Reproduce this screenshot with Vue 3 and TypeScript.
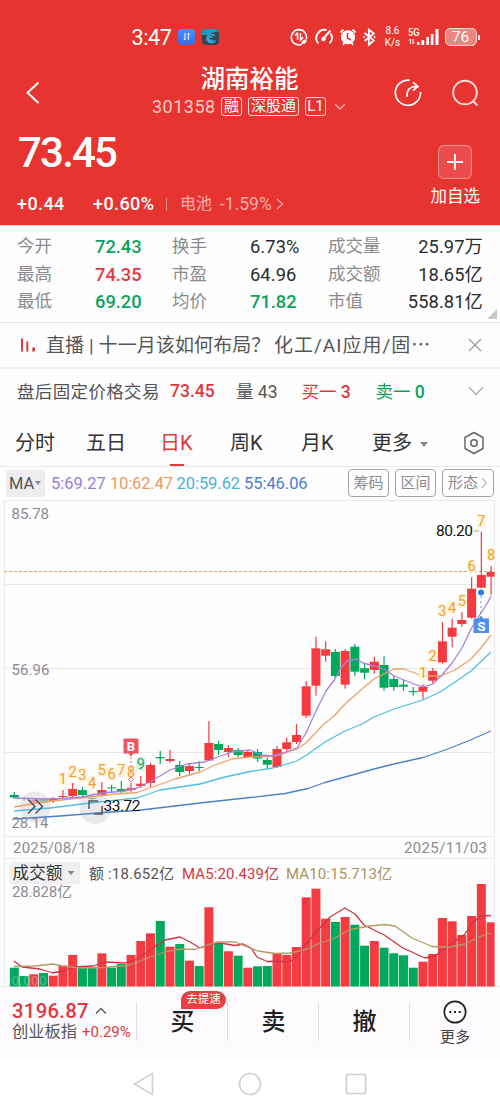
<script setup lang="ts">
type Tone = 'up' | 'down' | 'flat'
interface Stat { label: string; value: string; tone: Tone }
interface Mark { n: string; i: number; y: number; green?: boolean }

const stats: Stat[] = [
  { label: '今开', value: '72.43', tone: 'down' },
  { label: '换手', value: '6.73%', tone: 'flat' },
  { label: '成交量', value: '25.97万', tone: 'flat' },
  { label: '最高', value: '74.35', tone: 'up' },
  { label: '市盈', value: '64.96', tone: 'flat' },
  { label: '成交额', value: '18.65亿', tone: 'flat' },
  { label: '最低', value: '69.20', tone: 'down' },
  { label: '均价', value: '71.82', tone: 'down' },
  { label: '市值', value: '558.81亿', tone: 'flat' },
]

const tabs = ['分时', '五日', '日K', '周K', '月K']

// [rising, wick top, body top, body bottom, wick bottom, volume top]
const days: [number, number, number, number, number, number][] = [
  [0, 792, 795, 797.5, 799, 967.7], [0, 797, 798, 799, 801, 976], [1, 798, 800, 802.5, 804, 974.3],
  [0, 798, 799, 802.5, 803, 973], [1, 797, 799, 801, 803, 975.7], [1, 790, 796, 797, 799, 965.7],
  [1, 783, 789, 796, 798, 955], [0, 787, 790, 795, 797, 967.7], [0, 796, 798, 799, 804, 967.7],
  [1, 782, 790, 795.5, 797, 953.3], [0, 785, 787.3, 788.3, 792, 967.7], [0, 781, 789, 791, 793, 964],
  [1, 783, 788, 790, 792, 955], [1, 776, 783.7, 786, 788, 941], [1, 763, 765, 783, 787, 933.3],
  [0, 751, 757, 758.3, 764, 921], [1, 750, 759, 761, 763, 946.7], [0, 761, 765, 772, 776, 944],
  [1, 763, 766, 771, 774, 960.7], [0, 761, 767, 768, 771, 966], [1, 721, 743, 760.5, 761, 907.3],
  [0, 741, 744, 750, 755, 943.3], [1, 745, 748, 752, 757, 951.3], [0, 748, 750, 755, 757, 955.7],
  [1, 750, 752, 757, 757, 967.7], [0, 749, 752, 758.5, 762, 966.3], [0, 758, 760, 764.7, 768, 966],
  [1, 746, 749, 767, 768, 953.3], [1, 737.5, 742.3, 749, 752, 955], [1, 724, 735, 742, 744, 947],
  [1, 681, 686.3, 715.7, 718, 897.3], [1, 636.7, 648.3, 685.7, 695.7, 888.7], [1, 641.3, 649.3, 655.7, 661.7, 918.7],
  [0, 649, 652, 676, 678, 922], [1, 649, 651, 684.7, 688.7, 917], [0, 644, 646.7, 671.7, 675.7, 924.7],
  [0, 664, 668.3, 672.7, 679.3, 945.7], [1, 656.7, 661.7, 670, 673.7, 941], [0, 656.3, 665, 687.7, 690.7, 947.7],
  [0, 675.3, 679, 687, 690.7, 953.3], [0, 680, 684.7, 686.7, 691, 955.3], [0, 687, 691, 692.2, 695.7, 967.7],
  [1, 684.3, 687, 691.7, 699.3, 961.7], [1, 668, 671, 680.7, 683.3, 954], [1, 622, 641.3, 662.3, 663.7, 918],
  [1, 618.7, 627.7, 636.7, 647.3, 921.3], [1, 612, 620, 624, 627, 935], [1, 577.3, 588.7, 617.7, 618.7, 916],
  [1, 531.7, 575, 587.7, 588.3, 884], [1, 566, 572, 576.7, 595, 922.3],
]
const cx = (i: number): number => 14.3 + i * 9.73
const bodyWidth = (i: number): number => (i === 49 ? 8 : 9)

const marks: Mark[] = [
  { n: '1', i: 5, y: 779 }, { n: '2', i: 6, y: 772 }, { n: '3', i: 7, y: 775 }, { n: '4', i: 8, y: 783 },
  { n: '5', i: 9, y: 770 }, { n: '6', i: 10, y: 774 }, { n: '7', i: 11, y: 770 }, { n: '8', i: 12, y: 772 },
  { n: '9', i: 13, y: 764, green: true },
  { n: '1', i: 42, y: 673 }, { n: '2', i: 43, y: 656 }, { n: '3', i: 44, y: 611 }, { n: '4', i: 45, y: 607.5 },
  { n: '5', i: 46, y: 601 }, { n: '6', i: 47, y: 566 }, { n: '7', i: 48, y: 521 }, { n: '8', i: 49, y: 554.5 },
]

const priceLines = [
  { color: '#4c80c4', points: '14,819 60,816 110,812 137,810.5 200,803 250,797.5 285,793.5 308,788.5 325,782.5 345,777 374,769 394,764 423,757.5 445,750 468,741 491,731' },
  { color: '#50bfe0', points: '14,811 50,808 90,803 137,798 160,790 200,784 225,777 250,771.5 273,768 297,761 308,754 325,742 345,731 362,724 374,717 394,709 423,700 440,692 455,682 471,671 491,652' },
  { color: '#f0a068', points: '14,807 43,802 80,798 115,794 137,792.5 150,788 175,779 200,772 215,765 232,759 250,757 270,756.5 283,754 297,749 306,743 323,725 335,715 345,704 362,689 374,679 384,674 394,669 404,669 423,676 440,676 455,670 471,659 481,648 491,635' },
  { color: '#a583dc', points: '14,798 43,799 62,798.5 82,797 102,793 125,791 137,788 150,782 170,770 187,764 205,762 215,758 232,752 250,750 262,755 272,756 283,753 297,748 306,733 316,711 326,691 335,679 340,669 347,661 357,659 363,663 374,666 384,669 394,676 404,680 414,684 423,687 433,684 442,675 452,663 462,648 471,629 477,619 483,610 488,602 491,596' },
]
const volumeLines = [
  { color: '#cf3444', points: '14,961 22,967 40,969 53,973 62,971 75,967 93,966 105,962 125,963 137,959 150,950 165,940 180,937 190,942 200,948 212,944 220,943 235,945.5 243,944 251,948 257,957 267,961.5 290,961.5 298,956 303,948 317,931 330,917 345,908 355,914 364,925 384,935 403,948 425,958 435,956 447,947 465,934 471,924 481,916 491,915.5' },
  { color: '#b39a66', points: '14,966.5 35,966 53,964 62,966 80,968 105,967.5 130,965 150,957 165,952 180,949 195,949.5 207,945 218,942 235,942 250,948 258,951 275,953.5 290,953 307,949 320,943 333,939 350,929.5 370,926 385,924.5 395,926 412,938 432,946.5 450,947 465,944 480,936.5 491,933' },
]
</script>

<template>
  <main class="phone">
    <header class="hero">
      <div class="status">
        <span class="clock">3:47</span>
        <svg class="apps" width="42" height="18" viewBox="0 0 42 18">
          <defs>
            <linearGradient id="tile" x1="0" y1="0" x2="0" y2="1"><stop offset="0" stop-color="#3f96f8" /><stop offset="1" stop-color="#3f68e4" /></linearGradient>
          </defs>
          <rect x="0" y="1" width="17" height="16" rx="4" fill="url(#tile)" />
          <path d="M7 5v7l-1.500-1.500M10.300 12V5l1.500 1.500" fill="none" stroke="#fff" stroke-width="1" />
          <rect x="24" y="1" width="17" height="16" rx="4" fill="#3a444c" />
          <path d="M24 7V5a4 4 0 0 1 4-4h9a4 4 0 0 1 4 2l-7 2-4 2z" fill="#199bc4" />
          <path d="M37 8a4.5 4 0 1 0 .4 4.5M34.5 9.7a2 2 0 1 0 0 2" fill="none" stroke="#2da9dc" stroke-width="1.7" />
        </svg>
        <svg class="sys" width="86" height="20" viewBox="0 0 86 20" fill="none" stroke="#fff" stroke-width="1.6">
          <path d="M12 17.2A7.6 7.6 0 1 1 16.3 12" />
          <path d="M7.5 5.7v7M7.6 5.7 5 8.4M10.5 6v7l2.6-2.6" stroke-width="1.5" />
          <path d="M11.5 17c-.5-3 2-4.5 5-4.7.5 3.4-1.6 5.3-5 4.7z" fill="#fff" stroke="none" />
          <path d="M28.3 16.3A8.2 8.2 0 0 1 36.5 3M40.7 6.5a8.2 8.2 0 0 1-1.2 9.8" stroke-width="1.9" />
          <path d="M33 12 40.5 3.5" stroke-width="2" /><circle cx="33.5" cy="12" r="2.2" fill="#fff" stroke="none" />
          <circle cx="58" cy="10.3" r="7" fill="#fff" stroke="none" />
          <path d="M50.5 5.5 53.5 2.5M65.5 5.5 62.5 2.5M53 18l1.5-2M63 18l-1.5-2" stroke-width="1.8" />
          <path d="M57.5 6v5l3.5 2.2" stroke="#e83431" stroke-width="1.5" />
          <path d="m74.5 6 9.3 7.5-5 4.2V2.5l5 4-9.3 7.5" stroke-width="1.8" /><circle cx="74" cy="10" r="1" fill="#fff" stroke="none" /><circle cx="84.5" cy="10" r="1" fill="#fff" stroke="none" />
        </svg>
        <span class="speed"><i>8.6</i><i>K/s</i></span>
        <svg class="signal" width="32" height="20" viewBox="0 0 32 20" fill="#fff">
          <text x="0" y="8.500" font-size="10" font-weight="500" textLength="11.500" lengthAdjust="spacingAndGlyphs">5G</text>
          <path d="M2.500 17v-5L1 13.500M5 12v5l1.500-1.500" fill="none" stroke="#fff" />
          <path d="M9 15h2.500v3H9zM13.500 13h2.700v5h-2.700zM18.300 10H21v8h-2.700zM22.800 7h2.700v11h-2.700zM27.500 2h3v16h-3z" />
        </svg>
        <span class="battery">76</span>
        <span class="cell-tip"></span>
      </div>

      <div class="titlebar">
        <svg width="14" height="24" viewBox="0 0 14 24" fill="none" stroke="#fff" stroke-width="2"><path d="M12.500 1.500 1.500 11.700l11 10.300" /></svg>
        <div class="title">
          <h1>湖南裕能</h1>
          <div class="code">
            <span class="num">301358</span><b>融</b><b class="wide">深股通</b><b>L1</b>
            <svg width="12" height="8" viewBox="0 0 12 8" fill="none" stroke="#ffb1ac" stroke-width="1.3"><path d="m1 1 5 5 5-5" /></svg>
          </div>
        </div>
        <svg class="share" width="28" height="28" viewBox="0 0 28 28" fill="none" stroke="#fff" stroke-width="1.7"><path d="M15.500 1.200A12.600 12.600 0 1 0 26.500 13" /><path d="M13 18c-.5-6 2-10.500 9.500-10.600M19 3.300l5 4.200-5 4.200" /></svg>
        <svg width="28" height="28" viewBox="0 0 28 28" fill="none" stroke="#ffdedb" stroke-width="1.9"><circle cx="13" cy="13.500" r="11.800" /><path d="m21 22 4.500 4.500" /></svg>
      </div>

      <div class="quote">
        <div>
          <div class="price">73.45</div>
          <div class="delta">
            <span>+0.44</span><span>+0.60%</span><i></i><em>电池</em><em class="pct">-1.59%</em>
            <svg width="8" height="12" viewBox="0 0 8 12" fill="none" stroke="#f7a6a2" stroke-width="1.300"><path d="m1 1 5.500 5L1 11" /></svg>
          </div>
        </div>
        <div class="add">
          <svg width="34" height="34" viewBox="0 0 34 34"><rect x=".6" y=".6" width="32.800" height="32.800" rx="5" fill="#eb4b4b" stroke="#f59a97" /><path d="M9 17h16M17 9v16" stroke="#fff" stroke-width="2" /></svg>
          <span>加自选</span>
        </div>
      </div>
    </header>

    <section class="stats">
      <template v-for="s in stats" :key="s.label"><span class="label">{{ s.label }}</span><span :class="['val', s.tone]">{{ s.value }}</span></template>
      <i class="corner"></i>
    </section>

    <section class="live">
      <svg width="16" height="16" viewBox="0 0 16 16" fill="#e0383f"><path d="M1 1.500h2v13H1zM6.300 4.500h2v10h-2zM12.300 10.500h2.700v4h-2.700z" /></svg>
      <span>直播 | 十一月该如何布局？</span><span class="tail">化工/AI应用/固⋯</span>
      <svg width="14" height="14" viewBox="0 0 14 14" fill="none" stroke="#999" stroke-width="1.200"><path d="m1 1 12 12M13 1 1 13" /></svg>
    </section>

    <section class="fixed">
      <span class="cn">盘后固定价格交易</span><span class="up md">73.45</span><span>量 43</span><span class="up">买一 <b>3</b></span><span class="down">卖一 <b>0</b></span>
      <svg width="16" height="10" viewBox="0 0 16 10" fill="none" stroke="#aaa" stroke-width="1.300"><path d="m1 1 7 7.500L15 1" /></svg>
    </section>

    <nav class="tabs">
      <span v-for="t in tabs" :key="t" :class="{ active: t === '日K' }">{{ t }}</span>
      <span class="more">更多<i class="tri"></i></span>
      <svg width="22" height="24" viewBox="0 0 22 24" fill="none" stroke="#666" stroke-width="1.500"><path d="M11 1.500 20 6.500v11L11 22.500 2 17.500v-11z" stroke-linejoin="round" /><circle cx="11" cy="12" r="3.200" /></svg>
    </nav>

    <section class="averages">
      <span class="pick">MA<i class="tri"></i></span>
      <span class="p5">5:69.27</span><span class="p10">10:62.47</span><span class="p20">20:59.62</span><span class="p55">55:46.06</span>
      <button>筹码</button><button>区间</button><button>形态<svg width="7" height="12" viewBox="0 0 7 12" fill="none" stroke="#999"><path d="m1 1 4.500 5L1 11" /></svg></button>
    </section>

    <svg class="chart" width="500" height="488" viewBox="0 499 500 488">
      <g stroke="#e9e9ec" fill="none">
        <path d="M4.500 987V500.500H494.500V987M4 584.500H495M4 668.500H495M4 752.500H495M4 836.500H495M4 858.500H495M0 986.500H500" />
      </g>
      <path d="M4 571.500H495" stroke="#d6a878" stroke-dasharray="3 2" />

      <g v-for="(d, i) in days" :key="i" :fill="d[0] ? '#f53b42' : '#00a95c'">
        <rect :x="cx(i) - 0.6" :y="d[1]" width="1.2" :height="d[4] - d[1]" />
        <rect :x="cx(i) - 4.5" :y="d[2]" :width="bodyWidth(i)" :height="d[3] - d[2]" />
        <rect :x="cx(i) - 4.5" :y="d[5]" :width="bodyWidth(i)" :height="986.5 - d[5]" />
      </g>

      <g fill="#dddce2" opacity=".6"><circle cx="35" cy="807" r="15.500" /><circle cx="95" cy="808.500" r="15.500" /></g>

      <g fill="none" stroke-width="1.3" stroke-linejoin="round">
        <polyline v-for="l in priceLines" :key="l.color" :points="l.points" :stroke="l.color" />
        <polyline v-for="l in volumeLines" :key="l.color" :points="l.points" :stroke="l.color" />
      </g>

      <g v-for="(m, k) in marks" :key="'m' + k" text-anchor="middle" font-size="14.500">
        <rect :x="cx(m.i) - 4.8" :y="m.y - 7" width="9.6" height="14" rx="2" :fill="m.green ? '#d3f3df' : '#fff3dc'" opacity=".8" />
        <text :x="cx(m.i)" :y="m.y + 5" :fill="m.green ? '#25a35f' : '#f0a02c'">{{ m.n }}</text>
      </g>

      <path d="M131 757v24" stroke="#ed6b7a" stroke-dasharray="2 2" />
      <path d="m131 777 2.500 2.500-2.500 2.500-2.500-2.500z" fill="#fff" stroke="#ed6b7a" />
      <path d="M124.500 738.500h13a1 1 0 0 1 1 1v14h-5l-2.500 3-2.500-3h-5v-14a1 1 0 0 1 1-1z" fill="#ee5565" />
      <text x="131" y="751" text-anchor="middle" font-size="13" font-weight="700" fill="#fff">B</text>
      <path d="M481 596v22" stroke="#6699dd" stroke-dasharray="2 3" />
      <circle cx="481" cy="592.600" r="3" fill="#2d7ddc" />
      <path d="M473.500 618.500h5l2.500-2.500 2.500 2.500h5.500v14.500h-15.500z" fill="#4f8df0" />
      <text x="481.300" y="630.500" text-anchor="middle" font-size="13.500" font-weight="700" fill="#fff">S</text>

      <path d="m28 799.500 7 7-7 7M35.500 799.500l7 7-7 7" fill="none" stroke="#555" stroke-width="1.500" />
      <path d="M98 801h-9v8M102 806v8h-8" fill="none" stroke="#555" stroke-width="1.500" />
      <path d="M474 531h5" stroke="#999" />

      <g font-size="15" fill="#8b8b8f">
        <text x="11.500" y="519" textLength="37.500">85.78</text>
        <text x="11.500" y="675" textLength="38">56.96</text>
        <text x="11.500" y="828" textLength="37">28.14</text>
        <text x="13" y="853" textLength="82">2025/08/18</text>
        <text x="404" y="853" textLength="83">2025/11/03</text>
        <text x="12" y="896.500" textLength="60">28.828亿</text>
        <text x="11.500" y="985" font-size="13.500" textLength="35" opacity=".55" fill="#bbb">0.000</text>
      </g>
      <text x="436" y="536" font-size="15.500" textLength="37" fill="#111">80.20</text>
      <text x="103.500" y="810.500" font-size="15.500" textLength="37" fill="#111">33.72</text>

      <rect x="9" y="861.500" width="71" height="23" rx="2" fill="#f0f0f2" />
      <text x="12.500" y="879" font-size="16.500" textLength="50" fill="#333">成交额</text>
      <path d="M67.500 871h7l-3.500 4z" fill="#888" />
      <g font-size="15">
        <text x="89" y="879" textLength="85" fill="#555">额 :18.652亿</text>
        <text x="182" y="879" textLength="97" fill="#d6363e">MA5:20.439亿</text>
        <text x="286" y="879" textLength="106" fill="#aa925c">MA10:15.713亿</text>
      </g>
    </svg>

    <footer class="trade">
      <div class="index">
        <div class="big">3196.87<svg width="12" height="8" viewBox="0 0 12 8" fill="none" stroke="#555" stroke-width="1.300"><path d="m1 6.500 5-5 5 5" /></svg></div>
        <div class="sub"><span>创业板指</span><em>+0.29%</em></div>
      </div>
      <div class="act">买<span class="badge">去提速</span></div>
      <div class="act">卖</div>
      <div class="act">撤</div>
      <div class="menu">
        <svg width="24" height="24" viewBox="0 0 24 24"><circle cx="12" cy="12" r="10.700" fill="none" stroke="#222" stroke-width="1.700" /><path d="M6.300 11h2v2h-2zM11 11h2v2h-2zM15.700 11h2v2h-2z" fill="#222" /></svg>
        <span>更多</span>
      </div>
    </footer>

    <div class="keys">
      <svg width="234" height="24" viewBox="0 0 234 24" fill="none" stroke="#d2d2d4" stroke-width="1.700" stroke-linejoin="round">
        <path d="M19.500 1.500v21L1.500 12z" /><circle cx="117" cy="12" r="10.500" /><rect x="213.500" y="2.500" width="19" height="19" />
      </svg>
    </div>
  </main>
</template>

<style>
body { margin: 0; background: #fff; }
</style>

<style scoped>
.phone { width: 500px; height: 1111px; overflow: hidden; background: #fefefe; font-family: Roboto, "Noto Sans CJK SC", sans-serif; color: #333; box-sizing: border-box; }
.phone * { box-sizing: border-box; }
i, em { font-style: normal; }
svg { display: block; flex: none; }
span { white-space: nowrap; }
.up { color: #e0383f; }
.down { color: #0aa35c; }
.flat { color: #2c2c2e; }

.hero { height: 225px; background: #e83431; color: #fff; padding-top: 23px; }
.status { display: flex; align-items: center; height: 28px; padding-left: 131.500px; }
.clock { width: 46px; font-size: 21.500px; letter-spacing: -.4px; }
.sys { margin-left: 70px; }
.speed { display: flex; flex-direction: column; align-items: center; width: 22px; margin-left: 6px; font-size: 10px; line-height: 12px; }
.speed i { height: 12px; }
.speed i:first-child { height: 11.500px; }
.signal { margin-left: 4px; }
.battery { width: 32px; height: 18px; margin-left: 5px; border: 1.500px solid #ffd9d7; border-radius: 5px; background: #f08480; font-size: 15.500px; line-height: 16px; text-align: center; }
.cell-tip { width: 2px; height: 5px; margin-left: 1px; background: #ffd9d7; }

.titlebar { display: flex; align-items: center; height: 84px; padding: 0 22px 0 26px; }
.titlebar .share { margin-right: 30px; }
.title { width: 194px; margin: -4px 48px 0 112px; }
h1 { margin: 0; padding-left: 48.500px; font-size: 24.500px; line-height: 31px; font-weight: 500; }
.code { display: flex; align-items: center; height: 24px; }
.code .num { width: 69px; font-size: 18px; letter-spacing: .5px; color: #ffc9c5; }
.code b { width: 21px; height: 19px; margin-right: 6px; border: 1px solid #ffd6d3; border-radius: 3px; font-size: 15px; line-height: 17px; font-weight: 400; text-align: center; }
.code .wide { width: 51px; }
.code b:nth-of-type(3) { margin-right: 8px; }

.quote { display: flex; justify-content: space-between; padding: 0 20px 0 17px; }
.price { height: 53px; margin-top: -5px; padding-left: 1px; font-size: 42px; line-height: 46px; font-weight: 500; letter-spacing: -1.800px; }
.delta { display: grid; grid-template-columns: 76px 73px 14px 40px 56px 8px; align-items: center; height: 24px; margin-top: 9px; font-size: 18px; line-height: 24px; font-weight: 500; letter-spacing: .4px; }
.delta i { width: 1px; height: 13px; background: #f28a87; }
.delta em { font-size: 16px; font-weight: 400; letter-spacing: 0; color: #f9aeaa; }
.delta .pct { font-size: 17.500px; }
.add { display: flex; flex-direction: column; align-items: center; margin-top: 10px; font-size: 16.500px; line-height: 24px; }
.add span { margin-top: 6px; }

.stats { position: relative; display: grid; grid-template-columns: 78px 77px 78px 78px 60px 95px; grid-auto-rows: 27.700px; height: 98px; padding: 7px 0 0 17px; border-top: 1px solid #fbd0ce; border-bottom: 1px solid #e4e4e6; line-height: 27.700px; }
.label { font-size: 17.500px; color: #8b8b8d; }
.val { font-size: 18.300px; font-weight: 500; }
.val.flat { font-weight: 400; letter-spacing: .1px; }
.val:nth-child(6n) { text-align: right; }
.corner { position: absolute; right: 3px; bottom: 3px; border: 5px solid; border-color: transparent #c8c8ca #c8c8ca transparent; }

.live { display: grid; grid-template-columns: 26px 228px 194px 14px; align-items: center; height: 46px; padding-left: 20px; border-bottom: 2px solid #f1f1f3; font-size: 19px; color: #555; }
.live span { line-height: 24px; margin-top: 2px; letter-spacing: .1px; }
.live .tail { letter-spacing: 1px; }
.fixed { display: grid; grid-template-columns: 153px 66px 65.500px 74px 92.500px 16px; align-items: center; height: 43px; padding-left: 17px; font-size: 17.500px; color: #555; white-space: nowrap; }
.fixed .cn { letter-spacing: .35px; }
.fixed b { font-weight: 500; }
.md { font-weight: 500; }

.tabs { display: grid; grid-template-columns: 71px 74px 70px 71px 71px 91px 22px; align-items: center; height: 55px; padding-left: 15px; border-bottom: 1px solid #e8e8ea; font-size: 20px; color: #333; }
.tabs span { height: 54px; padding-top: 6px; line-height: 50px; }
.tabs svg { margin-top: 8px; margin-left: -.5px; }
.tabs .active { color: #e0383f; background: linear-gradient(#e0383f, #e0383f) 10px 100% / 14px 2px no-repeat; }
.tri { display: inline-block; border: solid transparent; border-width: 5px 4.500px 0; border-top-color: #888; }
.more .tri { margin-left: 8px; vertical-align: 3px; }

.averages { display: flex; align-items: center; height: 32px; padding-left: 6px; font-size: 16.500px; }
.pick { width: 39px; height: 27px; margin-right: 6px; padding-left: 3px; border-radius: 2px; background: #eeeef0; line-height: 27px; color: #555; }
.pick .tri { border-width: 4px 3.500px 0; vertical-align: 4px; margin-left: 1px; }
.p5 { width: 59px; color: #9b7fd4; }
.p10 { width: 66.500px; color: #ee9a5c; letter-spacing: -.15px; }
.p20 { width: 67.500px; color: #48b4d8; letter-spacing: -.05px; }
.p55 { width: 104px; color: #4b7ecf; letter-spacing: -.05px; }
button { display: flex; align-items: center; justify-content: center; gap: 3px; width: 41px; height: 28px; margin: 0 6px 0 0; padding: 0; border: 1px solid #a5a5a8; border-radius: 4px; background: transparent; font: 15px/24px Roboto, "Noto Sans CJK SC", sans-serif; color: #8b8b8d; flex: none; white-space: nowrap; }
button:last-child { width: 52px; }

.chart { font-family: Roboto, "Noto Sans CJK SC", sans-serif; }

.trade { display: grid; grid-template-columns: 136px 91px 91px 92px 90px; height: 71px; background: #fefbff; padding-top: 10px; }
.index { padding-left: 12px; }
.big { display: flex; align-items: center; gap: 6px; height: 28px; font-size: 20.300px; font-weight: 500; letter-spacing: .3px; color: #e0383f; }
.sub { display: grid; grid-template-columns: 70px 50px; align-items: center; height: 14px; font-size: 16.300px; line-height: 14px; color: #555; }
.sub em { font-size: 15px; color: #e0383f; }
.act { position: relative; height: 39px; margin-top: 5px; padding-left: 1px; border-left: 1px solid #e0dee3; font-size: 24px; line-height: 41px; text-align: center; color: #1f1f21; font-weight: 500; }
.act:nth-child(4) { border-right: 1px solid #e0dee3; }
.badge { position: absolute; left: 44px; top: -11px; width: 45px; height: 18px; border-radius: 9px 9px 9px 0; background: #ee3d42; color: #fff; font-size: 11.500px; line-height: 17px; font-weight: 400; }
.menu { display: flex; flex-direction: column; align-items: center; margin-top: 3px; height: 41px; font-size: 15px; line-height: 24px; color: #444; }
.menu span { margin-top: 1px; }
.keys { display: flex; justify-content: center; align-items: center; height: 52px; background: #fff; }
</style>
